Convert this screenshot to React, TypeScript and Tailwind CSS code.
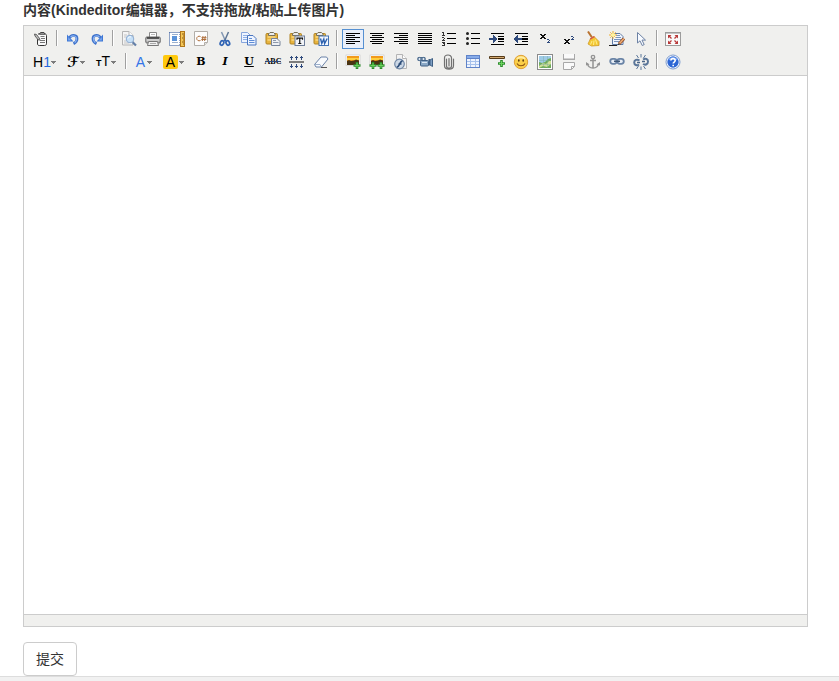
import type { ReactNode } from "react";

type Tool = { label: string; icon: ReactNode; active?: boolean; size?: string };

const NAVY = "#2f4a7c";

const svg = (children: ReactNode, crisp = false) => (
  <svg width="16" height="16" viewBox="0 0 16 16" fill="none" shapeRendering={crisp ? "crispEdges" : "auto"} aria-hidden="true">
    {children}
  </svg>
);

const lines = (rows: [number, number][]) =>
  svg(rows.map(([x, w], i) => <rect key={i} x={x} y={2 + i * 2} width={w} height="1" fill="#000" />), true);

const arrow = (
  <svg width="5" height="3" viewBox="0 0 5 3" className="shrink-0" shapeRendering="crispEdges" aria-hidden="true">
    <path d="M0 0h5v1H4v1H3v1H2V2H1V1H0z" fill="#7c7c7c" />
  </svg>
);

const clipboard = (
  <>
    <rect x="1" y="2.5" width="11.5" height="10.5" rx="1" fill="#e8b43e" stroke="#b08322" />
    <path d="M2.5 6h8M2.5 9h4" stroke="#f7d681" strokeWidth="1.5" />
    <path d="M3.5 4.5V3L5 1.5h3.5L10 3v1.5z" fill="#ececec" stroke="#77705a" />
  </>
);

const picture = (
  <>
    <rect x="1" y="1" width="14" height="10.5" fill="#fff" stroke="#c4c4c4" strokeWidth="0.6" />
    <rect x="2" y="2" width="12" height="8.5" fill="#f29a1c" />
    <path d="M2 4h12v2H2z" fill="#ffcf3c" />
    <path d="M2 7l2-1 2 1 3-.5 2-1 3 1v4.500H2z" fill="#4a3413" />
  </>
);

const plus = (x: number, y: number) => (
  <>
    <path d={`M${x} ${y - 3.5}v7M${x - 3.5} ${y}h7`} stroke="#2b8a2b" strokeWidth="2.6" />
    <path d={`M${x} ${y - 2.5}v5M${x - 2.5} ${y}h5`} stroke="#6bd45c" strokeWidth="1" />
  </>
);

const undoShape = (
  <>
    <path d="M4.5 7C6 3.300 12 3.300 12 7.800c0 2.200-1.500 4-3.500 5" stroke="#3f73cc" strokeWidth="2.8" />
    <path d="M2 3.500v7h6.500z" fill="#3f78d6" />
    <path d="M5.5 6.200c2-2 6-1.800 6 1.800 0 1.500-.8 2.800-1.800 3.700" stroke="#8db3f0" strokeWidth="1.2" />
    <path d="M3.200 6v3.500h3z" fill="#7ba6ee" />
  </>
);

const indent = (flip: boolean) =>
  svg(
    <>
      <path d="M2 2h13v1H2zM9 5h6v1H9zM9 7h6v2H9zM9 10h6v1H9zM2 13h13v1H2z" fill="#000" />
      {flip ? (
        <path d="M4 4h1v3h4v2H5v3H4v-1H3v-1H2V9H1V7h1V6h1V5h1z" fill={NAVY} />
      ) : (
        <path d="M4 4h1v1h1v1h1v1h1v2H7v1H6v1H5v1H4V9H0V7h4z" fill={NAVY} />
      )}
    </>,
    true,
  );

const list = (numbers: boolean) =>
  svg(
    <>
      <g shapeRendering="crispEdges">
        <path d="M6 2h9v1H6zM6 7h9v1H6zM6 12h9v1H6z" fill="#000" />
        {numbers && (
          <path d="M1 1h2v3H2V2H1zM1 4h3v1H1zM1 6h2v1H1zM3 7h1v1H3zM2 8h1v1H2zM1 9h3v1H1zM1 11h3v1H1zM2 12h2v1H2zM3 13h1v1H3zM1 14h3v1H1z" fill="#333" />
        )}
      </g>
      {!numbers && [2.5, 7.5, 12.5].map((y) => <circle key={y} cx="2.5" cy={y} r="1.5" fill="#222" />)}
    </>,
  );

const script = (x: string, two: string) =>
  svg(
    <>
      <path d={x} fill="#111" />
      <path d={two} fill={NAVY} />
    </>,
    true,
  );

const icons = {
  source: svg(
    <>
      <path d="M4.500 8v5c0 1 .8 1.500 1.800 1.500h5.200c1.200 0 2-.6 2-1.800V4.500c0-1-.6-1.500-1.600-1.500H5" fill="#fafafa" stroke="#333" />
      <path d="M6.500 3l1-1.500h3.500l1 1.500z" fill="#ddd" stroke="#444" />
      <path d="M7.500 5.500h4M8 7.500h4M7 9.500h5M7 11.500h5" stroke="#666" strokeWidth=".9" />
      <path d="M1.500 3l2 .5 3.500 4.500-.5 1.200L5 8.700 2 5z" fill="#bbb" stroke="#444" strokeWidth=".8" />
    </>,
  ),
  undo: svg(undoShape),
  redo: svg(<g transform="translate(16 0) scale(-1 1)">{undoShape}</g>),
  preview: svg(
    <>
      <path d="M1.500.5h6.500l4 4v9.500H1.500z" fill="#f4f4f4" stroke="#b4b4b4" />
      <path d="M8 .5v4h4" fill="#fff" stroke="#b4b4b4" />
      <path d="M3 4h3M3 6h2M3 10h2M3 12h5" stroke="#c4c4c4" />
      <path d="M11.500 11l3.500 3.500" stroke="#6580a8" strokeWidth="2.2" />
      <circle cx="9" cy="8" r="3.800" fill="#c6e0f7" stroke="#8facd0" />
      <path d="M7 7.500c.4-1.500 2-2 3-1.500" stroke="#fff" />
    </>,
  ),
  print: svg(
    <>
      <path d="M4.500 6V1.500h7V6" fill="#fff" stroke="#888" />
      <path d="M6 3.500h4" stroke="#bbb" />
      <rect x=".8" y="6" width="14.4" height="6" rx="1" fill="#b8b8b8" stroke="#666" />
      <path d="M2 7h12" stroke="#3c3c3c" strokeWidth="1.6" />
      <path d="M1.500 9h13" stroke="#e4e4e4" />
      <path d="M3.500 10.500h9l1 4h-11z" fill="#f0f0f0" stroke="#777" />
      <path d="M5 12.500h6" stroke="#aaa" />
    </>,
  ),
  template: svg(
    <>
      <path d="M.5 1.500h10.500v13H.5z" fill="#fff" stroke="#274f96" strokeDasharray="1 1" />
      <rect x="3" y="5" width="5" height="5" fill="#5b93d8" />
      <path d="M3 3.500h6M3 11.500h6" stroke="#9cb1ce" />
      <rect x="11.5" y=".5" width="4" height="15" fill="#f4c655" stroke="#b0771c" />
      <path d="M13 3h2M14 5h1M13 7h2M14 9h1M13 11h2M14 13h1" stroke="#8a5a16" />
    </>,
  ),
  code: svg(
    <>
      <path d="M1.500 .5h13v11l-3 3h-10z" fill="#fdfdfd" stroke="#b2aea8" />
      <path d="M14.500 11.500h-3v3" fill="#e3e3e3" stroke="#b2aea8" />
      <path d="M7.500 5.500C5.500 4.500 3.700 6 3.700 7.500s1.800 3 3.800 2M10 5l-.7 5M12.300 5l-.7 5M8.500 6.700h5M8.300 8.500h5" stroke="#b0703c" />
    </>,
  ),
  cut: svg(
    <>
      <path d="M4.500 1l4 9" stroke="#8297b3" strokeWidth="1.5" />
      <path d="M11.500 1l-4 9" stroke="#5d7594" strokeWidth="1.5" />
      <ellipse cx="5" cy="12" rx="1.7" ry="2.3" stroke="#2f63b4" strokeWidth="1.7" transform="rotate(25 5 12)" />
      <ellipse cx="10.8" cy="12" rx="1.7" ry="2.3" stroke="#2f63b4" strokeWidth="1.7" transform="rotate(-25 10.8 12)" />
      <path d="M6.500 9.500h3" stroke="#2f63b4" strokeWidth="1.5" />
    </>,
  ),
  copy: svg(
    <>
      <path d="M.5 1.500h6l2.500 2.500v7.500H.5z" fill="#eef4ff" stroke="#86a5dc" />
      <path d="M2 4.500h4M2 6.500h4M2 8.500h4" stroke="#8fb0e6" />
      <path d="M6.500 4.500h5.500l3 3v6.500H6.500z" fill="#eef4ff" stroke="#4a76c0" />
      <path d="M8 7.500h3M8 9.500h5.500M8 11.500h5.500" stroke="#5d8cd6" />
    </>,
  ),
  paste: svg(
    <>
      {clipboard}
      <path d="M6.500 7.500h5.500l3 3v4H6.500z" fill="#eef0f4" stroke="#76839a" />
      <path d="M8 9.500h3M8 11.500h5.500" stroke="#8d98ab" />
    </>,
  ),
  plain: svg(
    <>
      {clipboard}
      <rect x="6" y="5" width="9.5" height="9.5" fill="#f2f4f8" stroke="#6d7d98" />
      <path d="M8 8.800V7.200h5.500v1.600M10.750 7v5.500M9.300 12.500h3" stroke="#111" strokeWidth="1.2" />
    </>,
  ),
  word: svg(
    <>
      {clipboard}
      <rect x="6" y="5" width="9.5" height="9.5" fill="#f2f7ff" stroke="#4272b4" />
      <path d="M7.500 7.500l1.300 5 2-4.500.8 4.500 2.600-5" stroke="#2b60ae" strokeWidth="1.4" />
    </>,
  ),
  sub: script(
    "M3 3h2v1h2V3h2v1H8v1H7v1h1v1h1v1H7V7H5v1H3V7h1V6h1V5H4V4H3z",
    "M10 8h2v1h-2zM12 9h1v1h-1zM11 10h1v1h-1zM10 11h3v1h-3z",
  ),
  sup: script(
    "M3 8h2v1h2V8h2v1H8v1H7v1h1v1h1v1H7v-1H5v1H3v-1h1v-1h1v-1H4V9H3z",
    "M10 5h2v1h-2zM12 6h1v1h-1zM11 7h1v1h-1zM10 8h3v1h-3z",
  ),
  clean: svg(
    <>
      <path d="M3 .5l4 6" stroke="#b9722f" strokeWidth="2" />
      <path d="M5.500 7.500L9 5.500l5 5v4l-7.500.5-3.500-2z" fill="#f3c832" stroke="#d09a25" strokeWidth=".8" />
      <path d="M5.200 8.200l4.300-2.700" stroke="#d4574b" strokeWidth="1.4" />
      <path d="M7 10l-1.500 3.500M9 9.500l-.5 4.500M10.500 8.500l1.500 5" stroke="#fff09a" strokeWidth=".9" />
    </>,
  ),
  format: svg(
    <>
      <path d="M3.500 2.500h7.500l3 3v8H3.500z" fill="#f1f5fc" stroke="#5f7ba6" />
      <path d="M7 4.500h4M7 6.500h5M5 8.500h7M5 10.500h5" stroke="#7b95bd" />
      <path d="M4 0v8M0 4h8M1.300 1.300l5.400 5.400M6.700 1.300L1.300 6.700" stroke="#f0ac2c" />
      <circle cx="4" cy="4" r="2" fill="#fff4a0" />
      <path d="M15 7.500L10 13" stroke="#8b4a26" strokeWidth="3.2" />
      <path d="M15 7.500L10 13" stroke="#f0ac72" strokeWidth="1.6" />
      <path d="M10.200 12l-2.200 2.500 2.800-1.200z" fill="#222" />
      <path d="M0 14.500h8" stroke="#222" />
    </>,
  ),
  select: svg(
    <path d="M4.500 1.500v10.500l2.500-2.200 2.200 4.700 2-.9-2.200-4.500h3.500z" fill="#f7faff" stroke="#6d82a4" strokeLinejoin="round" />,
  ),
  fullscreen: svg(
    <>
      <rect x=".5" y="1.5" width="15" height="13" fill="#fafafa" stroke="#9c9c9c" />
      <path d="M1 2.500h14" stroke="#c4c4c4" />
      <path d="M3 4h3.500L3 7.500zM13 4v3.500L9.500 4zM3 13V9.500L6.500 13zM13 13H9.500L13 9.500z" fill="#b83a3a" />
      <path d="M4 5l2.500 2.500M12 5L9.500 7.500M4 12l2.500-2.500M12 12L9.500 9.500" stroke="#b83a3a" strokeWidth="1.3" />
    </>,
  ),
  strike: (
    <span className="relative flex h-4 w-4 items-center justify-center font-['Liberation_Serif',serif] text-[8px] leading-4 font-bold text-black">
      ABC
      <span className="absolute inset-x-0 top-[7px] h-px bg-[#2f4a7c]" />
    </span>
  ),
  lineheight: svg(
    <>
      <rect x="0" y="7" width="15" height="2" fill="#7c7c7c" />
      {[0, 5, 10].map((x) => (
        <path key={x} d={`M${x + 2} 2h1v1h1v1h-1v2h-1V4h-1V3h1zM${x + 2} 10h1v2h1v1h-1v1h-1v-1h-1v-1h1z`} fill={NAVY} />
      ))}
    </>,
    true,
  ),
  eraser: svg(
    <>
      <path d="M1.500 10.500L8 3h5.500l1.500 2-6.500 8H3z" fill="#f8fafd" stroke="#6a82a8" strokeLinejoin="round" />
      <path d="M1.500 10.500h5.500l1.500 2.500" stroke="#90a5c4" strokeWidth=".9" />
      <path d="M8 13.500h6" stroke="#555" />
    </>,
  ),
  image: svg(<>{picture}{plus(12, 11.5)}</>),
  multiimage: svg(<>{picture}{plus(4, 11.5)}{plus(12, 11.5)}</>),
  flash: svg(
    <>
      <path d="M3.500 .5h6l4 4v10H3.500z" fill="#f2f2f2" stroke="#b4b4b4" />
      <path d="M9.500.5v4h4" fill="#fff" stroke="#b4b4b4" />
      <circle cx="6.5" cy="10" r="4.8" fill="#ccd8e6" stroke="#7289a6" strokeWidth="1.2" />
      <path d="M9.500 6.800C6.500 7 7 12.500 3.800 13.200M5.500 10h3" stroke="#2d4d78" strokeWidth="1.7" />
    </>,
  ),
  media: svg(
    <>
      <path d="M1 3.500h7v3H1z" fill="#7f9cba" stroke="#4c6b8d" />
      <circle cx="2.5" cy="5" r="1.6" fill="#dce6f1" stroke="#4c6b8d" />
      <circle cx="6.5" cy="5" r="1.6" fill="#dce6f1" stroke="#4c6b8d" />
      <rect x="3.5" y="6.5" width="8" height="5.5" rx="1" fill="#8aa8c6" stroke="#3f5f83" />
      <rect x="11.5" y="5" width="1.5" height="6.5" fill="#3f5f83" />
      <path d="M13 6l2.500-1.500v8L13 11z" fill="#7fa0c4" stroke="#3f5f83" />
      <path d="M5 8.500h5" stroke="#dce8f4" />
    </>,
  ),
  file: svg(
    <path d="M5.500 5v7c0 2.800 5 2.800 5 0V4c0-4-7-4-7 0v7.500c0 5 9 5 9 0V5M8 4.500V12" stroke="#707070" strokeWidth="1.2" strokeLinecap="round" />,
  ),
  table: svg(
    <>
      <rect x="1" y="1" width="14" height="13" fill="#5f83c8" />
      <path d="M2 5h12v8H2z" fill="#a6c1ec" />
      <path d="M2 2h12v2H2z" fill="#86abe9" />
      <path d="M2 5h3v2H2zM6 5h4v2H6zM11 5h3v2h-3zM2 8h3v2H2zM6 8h4v2H6zM11 8h3v2h-3zM2 11h3v2H2zM6 11h4v2H6zM11 11h3v2h-3z" fill="#eef4fe" />
    </>,
    true,
  ),
  rule: svg(
    <>
      <rect x="0" y="2" width="16" height="3" rx="1" fill="#553a18" />
      <path d="M1 3.500h14" stroke="#d3a970" />
      {plus(12.5, 9.5)}
    </>,
  ),
  smile: svg(
    <>
      <circle cx="8" cy="8" r="6.7" fill="#fbcf48" stroke="#e0a038" />
      <path d="M4 5c2-2.300 6-2.300 8 0" stroke="#ffeca0" strokeWidth="2" />
      <ellipse cx="5.8" cy="6.5" rx=".8" ry="1.2" fill="#5c3a12" />
      <ellipse cx="10.2" cy="6.5" rx=".8" ry="1.2" fill="#5c3a12" />
      <path d="M4 9.500c1.500 3 6.500 3 8 0" stroke="#8d5312" strokeWidth="1.1" />
    </>,
  ),
  map: svg(
    <>
      <rect x=".5" y=".5" width="15" height="15" fill="#fff" stroke="#8a8a8a" />
      <rect x="2" y="2" width="12" height="12" fill="#9ecbe6" />
      <path d="M2 8l3 1 3-1 3-3 3-1v10H2z" fill="#6fab58" />
      <path d="M2 12l4-3 3 1 3-3h2v3l-4 3-4-1-4 2z" fill="#cfdf98" />
      <path d="M6.500 2v12M10.500 2v12M2 6.500h12M2 10.500h12" stroke="#7aa9a0" strokeWidth=".4" />
    </>,
  ),
  pagebreak: svg(
    <>
      <path d="M2.500 0v5h11V0" fill="#fafafa" stroke="#a8a8a8" />
      <path d="M2 5.500h12" stroke="#a8a8a8" />
      <path d="M2.500 8.500h11v4l-3 3h-8z" fill="#fafafa" stroke="#a8a8a8" />
      <path d="M13.500 12.500h-3v3" stroke="#a8a8a8" />
    </>,
  ),
  anchor: svg(
    <>
      <circle cx="8" cy="3" r="1.7" stroke="#939393" strokeWidth="1.3" />
      <path d="M8 5v9M5 6.500h6M2.500 9.500c.5 3 2.500 4.500 5.500 4.500s5-1.500 5.500-4.500" stroke="#939393" strokeWidth="1.5" />
      <path d="M1 11.500V8l3.500 2.500zM15 11.500V8l-3.500 2.500z" fill="#939393" />
    </>,
  ),
  link: svg(
    <>
      <rect x="1.2" y="4.8" width="6.5" height="5" rx="2.5" fill="#e7edf5" stroke="#6a84a6" strokeWidth="1.8" />
      <rect x="8.3" y="4.8" width="6.5" height="5" rx="2.5" fill="#e7edf5" stroke="#6a84a6" strokeWidth="1.8" />
      <path d="M5 7.300h6" stroke="#3f5878" strokeWidth="1.5" />
    </>,
  ),
  unlink: svg(
    <>
      <path d="M6.500 6.500C4 4.800 1.200 6 1.200 8.500S4 12 6 10.500M10 5.500c2.500-1.500 5-.5 5 2s-2.500 4-5 2.500" stroke="#5b7699" strokeWidth="2" />
      <path d="M4 8.500h3M9 7.500h3" stroke="#4c6688" strokeWidth="1.5" />
      <path d="M8 0v3.500M3.500 1l2 3M12.500 1l-2 3M8 12.500V16M3.500 15l2-3M12.500 15l-2-3" stroke="#5b7699" />
    </>,
  ),
  help: svg(
    <>
      <circle cx="8" cy="8" r="7" fill="#fff" stroke="#7d9cce" />
      <circle cx="8" cy="8" r="5.7" fill="#2c66d4" />
      <path d="M4 6c1-3 7-3 8 0" stroke="#6f9df0" strokeWidth="1.5" />
      <path d="M5.900 6.600c0-2.600 4.300-2.600 4.300 0 0 1.500-2 1.400-2 3M8.200 10.700v1.500" stroke="#fff" strokeWidth="1.6" />
    </>,
  ),
};

const firstRow: Tool[][] = [
  [{ label: "HTML代码", icon: icons.source }],
  [{ label: "后退", icon: icons.undo }, { label: "前进", icon: icons.redo }],
  [
    { label: "预览", icon: icons.preview },
    { label: "打印", icon: icons.print },
    { label: "插入模板", icon: icons.template },
    { label: "插入程序代码", icon: icons.code },
    { label: "剪切", icon: icons.cut },
    { label: "复制", icon: icons.copy },
    { label: "粘贴", icon: icons.paste },
    { label: "粘贴为无格式文本", icon: icons.plain },
    { label: "从Word粘贴", icon: icons.word },
  ],
  [
    { label: "左对齐", active: true, icon: lines([[1, 14], [1, 9], [1, 14], [1, 9], [1, 14], [1, 9]]) },
    { label: "居中", icon: lines([[1, 14], [3, 10], [1, 14], [3, 10], [1, 14], [3, 10]]) },
    { label: "右对齐", icon: lines([[1, 14], [6, 9], [1, 14], [6, 9], [1, 14], [6, 9]]) },
    { label: "两端对齐", icon: lines([[1, 14], [1, 14], [1, 14], [1, 14], [1, 14], [1, 14]]) },
    { label: "编号", icon: list(true) },
    { label: "项目符号", icon: list(false) },
    { label: "增加缩进", icon: indent(false) },
    { label: "减少缩进", icon: indent(true) },
    { label: "下标", icon: icons.sub },
    { label: "上标", icon: icons.sup },
    { label: "清理HTML代码", icon: icons.clean },
    { label: "一键排版", icon: icons.format },
    { label: "全选", icon: icons.select },
  ],
  [{ label: "全屏显示", icon: icons.fullscreen }],
];

const serif = "font-['DejaVu_Serif',serif] text-[11px] leading-4 text-black";

const secondRow: Tool[][] = [
  [
    { label: "段落", size: "w-[31px]", icon: <><span className="w-[18px] text-left">H<span className="text-[#2468df]">1</span></span>{arrow}</> },
    { label: "字体", size: "w-[27px]", icon: <><b className="flex w-[14px] justify-center font-['DejaVu_Sans',sans-serif]"><i>ℱ</i></b>{arrow}</> },
    { label: "文字大小", size: "w-[29px]", icon: <><span className="w-4 text-center"><b className="text-[9px]">T</b>T</span>{arrow}</> },
  ],
  [
    { label: "文字颜色", size: "w-[26px]", icon: <><span className="w-[13px] text-center text-[#3474e8]">A</span>{arrow}</> },
    { label: "文字背景", size: "w-[29px]", icon: <><span className="mx-px h-[14px] w-[15px] rounded-xs bg-[#ffc90e] text-center leading-[15px]">A</span>{arrow}</> },
    { label: "粗体", icon: <b className={serif}>B</b> },
    { label: "斜体", icon: <b className={serif}><i>I</i></b> },
    { label: "下划线", icon: <b className={`${serif} underline underline-offset-1`}>U</b> },
    { label: "删除线", icon: icons.strike },
    { label: "行距", icon: icons.lineheight },
    { label: "删除格式", icon: icons.eraser },
  ],
  [
    { label: "图片", icon: icons.image },
    { label: "批量图片上传", icon: icons.multiimage },
    { label: "Flash", icon: icons.flash },
    { label: "视音频", icon: icons.media },
    { label: "插入文件", icon: icons.file },
    { label: "表格", icon: icons.table },
    { label: "插入横线", icon: icons.rule },
    { label: "插入表情", icon: icons.smile },
    { label: "百度地图", icon: icons.map },
    { label: "插入分页符", icon: icons.pagebreak },
    { label: "锚点", icon: icons.anchor },
    { label: "超级链接", icon: icons.link },
    { label: "取消超级链接", icon: icons.unlink },
  ],
  [{ label: "关于", icon: icons.help }],
];

function ToolButton({ label, icon, active, size }: Tool) {
  return (
    <button
      type="button"
      aria-label={label}
      aria-pressed={active}
      className={`m-px flex h-5 shrink-0 items-center border px-0.5 text-sm leading-4 text-black ${
        size ? `${size} justify-start` : "w-[22px] justify-center"
      } ${active ? "border-[#5690d2] bg-[#e9effa]" : "border-transparent hover:border-[#5690d2]"}`}
    >
      {icon}
    </button>
  );
}

function ToolRow({ groups }: { groups: Tool[][] }) {
  return (
    <div className="flex">
      {groups.map((group, i) => (
        <div key={i} className="flex">
          {i > 0 && <span className="mx-[3px] mt-0.5 h-4 w-0.5 border-l border-r border-l-[#a0a0a0] border-r-white" />}
          {group.map((tool) => (
            <ToolButton key={tool.label} {...tool} />
          ))}
        </div>
      ))}
    </div>
  );
}

export default function App() {
  return (
    <div className="flex min-h-screen flex-col bg-white font-['Liberation_Sans','Noto_Sans_CJK_SC',sans-serif] text-sm leading-5 text-[#333]">
      <form className="flex flex-1 flex-col pr-[31px] pl-[23px]" onSubmit={(e) => e.preventDefault()}>
        <label htmlFor="content" className="mb-[5px] font-bold">
          内容(Kindeditor编辑器，不支持拖放/粘贴上传图片)
        </label>
        <div className="flex flex-1 flex-col border border-[#ccc]">
          <div className="flex flex-col gap-px overflow-hidden border-b border-[#ccc] bg-[#f0f0ee] px-[5px] py-0.5">
            <ToolRow groups={firstRow} />
            <ToolRow groups={secondRow} />
          </div>
          <textarea id="content" className="block w-full flex-1 resize-none bg-white p-2 outline-none" />
          <div className="h-3 border-t border-[#ccc] bg-[#f0f0ee]" />
        </div>
        <button type="submit" className="mt-[15px] self-start rounded border border-[#ccc] bg-white px-3 py-1.5 text-[#333]">
          提交
        </button>
      </form>
      <footer className="h-[5px] border-t border-[#ddd] bg-[#f1f1f1]" />
    </div>
  );
}
